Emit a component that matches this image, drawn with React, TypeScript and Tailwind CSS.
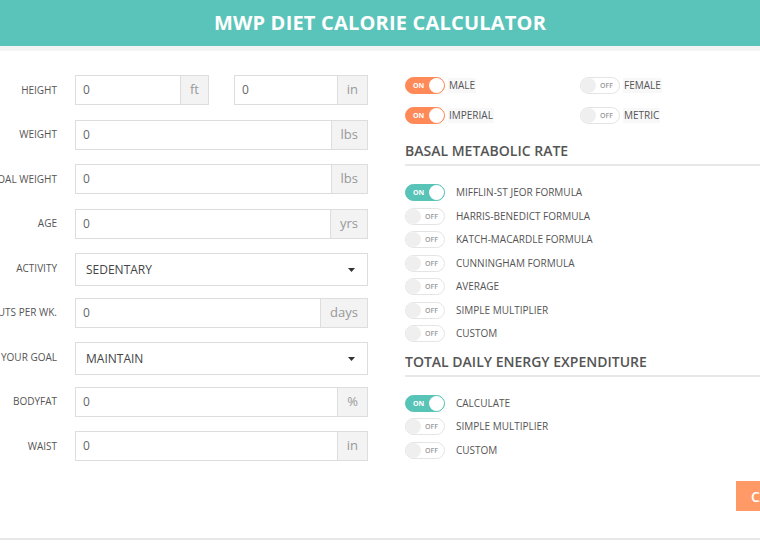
import React from "react";

const font = { fontFamily: '"Open Sans", "Liberation Sans", sans-serif' };

function Toggle({ on, color }: { on: boolean; color?: "orange" | "teal" }) {
  if (on) {
    const bg = color === "orange" ? "bg-[#ff8a57] border-[#ff8a57]" : "bg-[#58c3b7] border-[#58c3b7]";
    return (
      <div className={`w-[40px] h-[17px] rounded-full border flex items-center justify-between shrink-0 ${bg}`}>
        <span className="pl-[7px] text-[7px] font-bold text-white leading-none">ON</span>
        <span className="w-[15px] h-[15px] rounded-full bg-white" />
      </div>
    );
  }
  return (
    <div className="w-[40px] h-[17px] rounded-full border border-[#e4e4e4] bg-white flex items-center justify-between shrink-0">
      <span className="w-[15px] h-[15px] rounded-full bg-[#efefef]" />
      <span className="pr-[6px] text-[7px] font-semibold text-[#999] leading-none">OFF</span>
    </div>
  );
}

function Field({ label, unit, select }: { label: string; unit?: string; select?: string }) {
  return (
    <div className="flex items-start h-[44.5px]">
      <div className="w-[57px] h-[30px] shrink-0 flex justify-end items-center">
        <span className="whitespace-nowrap text-[10px] text-[#555]">{label}</span>
      </div>
      <div className="ml-[18px] w-[293px]">
        {select ? (
          <div className="h-[33px] border border-[#ddd] flex items-center justify-between pl-[10px] pr-[12px]">
            <span className="text-[12px] text-[#444]">{select}</span>
            <svg width="7" height="4" viewBox="0 0 7 4">
              <path d="M0 0h7L3.5 4z" fill="#333" />
            </svg>
          </div>
        ) : (
          <Input unit={unit!} />
        )}
      </div>
    </div>
  );
}

function Input({ unit }: { unit: string }) {
  return (
    <div className="h-[30px] border border-[#ddd] flex">
      <div className="flex-1 flex items-center pl-[7px] text-[12px] text-[#666]">0</div>
      <div className="border-l border-[#ddd] bg-[#f3f3f3] flex items-center px-[9px] text-[13px] text-[#999]">{unit}</div>
    </div>
  );
}

function OptionRow({ label, on }: { label: string; on?: boolean }) {
  return (
    <div className="h-[23.5px] flex items-center">
      <Toggle on={!!on} color="teal" />
      <span className="ml-[11px] text-[10px] text-[#555]">{label}</span>
    </div>
  );
}

function Heading({ children }: { children: React.ReactNode }) {
  return (
    <div className="border-b-2 border-[#e8e8e8] pb-[2px] mb-[15px]">
      <h2 className="text-[14px] font-semibold text-[#555] leading-[22px]">{children}</h2>
    </div>
  );
}

export default function App() {
  return (
    <div className="w-[760px] h-[543px] overflow-hidden bg-white flex flex-col" style={font}>
      <header className="h-[46px] bg-[#5bc4ba] flex items-center justify-center">
        <h1 className="text-[20px] font-bold text-white tracking-[0.2px]">MWP DIET CALORIE CALCULATOR</h1>
      </header>
      <div className="h-[5px] bg-[#f4f4f4]" />

      <div className="flex flex-1">
        <div className="pt-[24px] shrink-0">
          <div className="flex items-start h-[44.5px]">
            <div className="w-[57px] h-[30px] shrink-0 flex justify-end items-center">
              <span className="whitespace-nowrap text-[10px] text-[#555]">HEIGHT</span>
            </div>
            <div className="ml-[18px] w-[293px] grid grid-cols-2 gap-[25px]">
              <Input unit="ft" />
              <Input unit="in" />
            </div>
          </div>
          <Field label="WEIGHT" unit="lbs" />
          <Field label="GOAL WEIGHT" unit="lbs" />
          <Field label="AGE" unit="yrs" />
          <Field label="ACTIVITY" select="SEDENTARY" />
          <Field label="WORKOUTS PER WK." unit="days" />
          <Field label="YOUR GOAL" select="MAINTAIN" />
          <Field label="BODYFAT" unit="%" />
          <Field label="WAIST" unit="in" />
        </div>

        <div className="ml-[37px] w-[460px] shrink-0 pt-[19px]">
          <div className="grid grid-cols-[175px_1fr]">
            <div className="h-[30px] flex items-center">
              <Toggle on color="orange" />
              <span className="ml-[3px] px-[1px] bg-[#f8f8f8] text-[10px] text-[#555]">MALE</span>
            </div>
            <div className="h-[30px] flex items-center">
              <Toggle on={false} />
              <span className="ml-[3px] px-[1px] bg-[#f8f8f8] text-[10px] text-[#555]">FEMALE</span>
            </div>
            <div className="h-[30px] flex items-center">
              <Toggle on color="orange" />
              <span className="ml-[3px] px-[1px] bg-[#f8f8f8] text-[10px] text-[#555]">IMPERIAL</span>
            </div>
            <div className="h-[30px] flex items-center">
              <Toggle on={false} />
              <span className="ml-[3px] px-[1px] bg-[#f8f8f8] text-[10px] text-[#555]">METRIC</span>
            </div>
          </div>

          <div className="mt-[10px]">
            <Heading>BASAL METABOLIC RATE</Heading>
            <OptionRow label="MIFFLIN-ST JEOR FORMULA" on />
            <OptionRow label="HARRIS-BENEDICT FORMULA" />
            <OptionRow label="KATCH-MACARDLE FORMULA" />
            <OptionRow label="CUNNINGHAM FORMULA" />
            <OptionRow label="AVERAGE" />
            <OptionRow label="SIMPLE MULTIPLIER" />
            <OptionRow label="CUSTOM" />
          </div>

          <div className="mt-[5px]">
            <Heading>TOTAL DAILY ENERGY EXPENDITURE</Heading>
            <OptionRow label="CALCULATE" on />
            <OptionRow label="SIMPLE MULTIPLIER" />
            <OptionRow label="CUSTOM" />
          </div>

          <button className="mt-[19px] ml-[331px] h-[30px] px-[15px] bg-[#ff9a66] text-white text-[14px] font-semibold">
            CALCULATE
          </button>
        </div>
      </div>

      <div className="h-[2px] bg-[#e8e8e8] mb-[3px]" />
    </div>
  );
}
